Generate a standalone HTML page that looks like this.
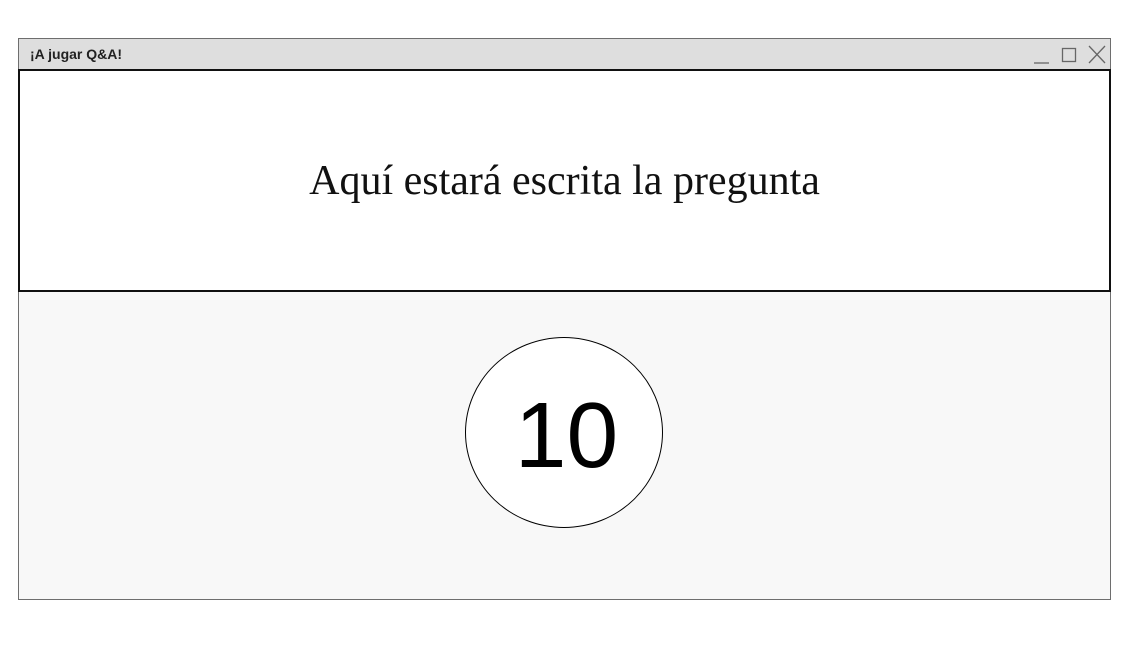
<!DOCTYPE html>
<html><head><meta charset="utf-8"><style>
html,body{margin:0;padding:0;background:#fff;width:1130px;height:650px;overflow:hidden;}
.win{position:absolute;left:18px;top:38px;width:1091px;height:560px;border:1px solid #6e6e6e;background:#f8f8f8;}
.title{position:absolute;left:0;top:0;width:1091px;height:30px;background:#dedede;}
.title span{position:absolute;left:11px;top:7px;font:bold 14px "Liberation Sans",sans-serif;color:#222;}
.q{position:absolute;top:30px;left:-1px;width:1089px;height:219px;border:2px solid #111;background:#fff;}
.q div{position:absolute;left:0;right:0;top:86px;text-align:center;font:42px "Liberation Serif",serif;color:#111;}
.c{position:absolute;left:446px;top:298px;width:196px;height:189px;border:1.7px solid #000;border-radius:50%;background:#fff;}
.c div{position:absolute;left:5px;right:0;top:42px;text-align:center;font:93px "Liberation Sans",sans-serif;color:#000;line-height:110px;}
</style></head><body>
<div class="win">
<div class="title"><span>¡A jugar Q&amp;A!</span>
<svg style="position:absolute;left:1010px;top:4px" width="80" height="24" viewBox="0 0 80 24">
<line x1="5" y1="20" x2="20" y2="20" stroke="#666" stroke-width="1.3"/>
<rect x="33.5" y="5.5" width="13" height="13" fill="none" stroke="#666" stroke-width="1.3"/>
<line x1="60" y1="3" x2="76" y2="20" stroke="#666" stroke-width="1.3"/>
<line x1="76" y1="3" x2="60" y2="20" stroke="#666" stroke-width="1.3"/>
</svg></div>
<div class="q"><div>Aquí estará escrita la pregunta</div></div>
<div class="c"><div>10</div></div>
</div>
</body></html>
